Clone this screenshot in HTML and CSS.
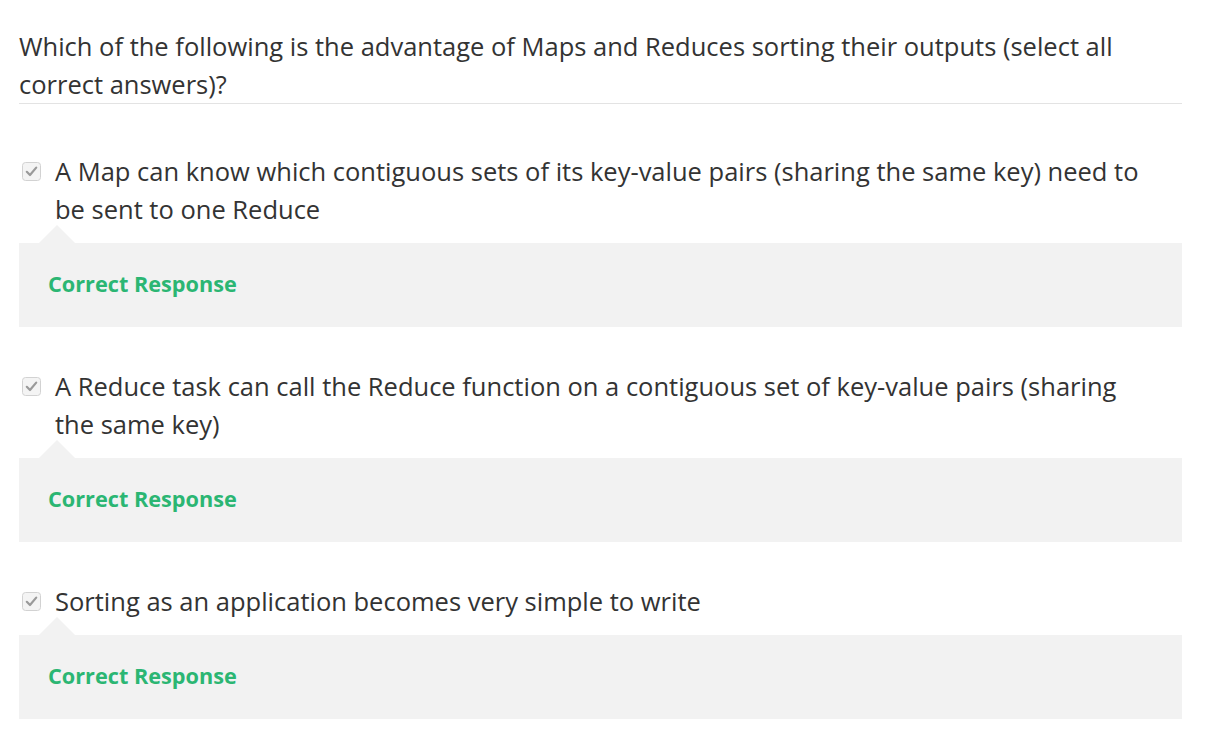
FILE: index.html
```html
<!DOCTYPE html>
<html>
<head>
<meta charset="utf-8">
<link rel="stylesheet" href="styles.css">
</head>
<body>
<div class="quiz">
  <div class="question">Which of the following is the advantage of Maps and Reduces sorting their outputs (select all correct answers)?</div>
  <div class="options">
    <div class="option">
      <div class="answer">
        <span class="check"><svg width="19" height="19" viewBox="0 0 19 19"><rect x="0.5" y="0.5" width="18" height="18" rx="3" fill="#f4f4f4" stroke="#d2d2d2"/><path d="M4.8 9.8 L8 13 L14.2 5.6" fill="none" stroke="#9a9a9a" stroke-width="2.2" stroke-linecap="round" stroke-linejoin="round"/></svg></span>
        <span class="label">A Map can know which contiguous sets of its key-value pairs (sharing the same key) need to be sent to one Reduce</span>
      </div>
      <div class="feedback">Correct Response</div>
    </div>
    <div class="option">
      <div class="answer">
        <span class="check"><svg width="19" height="19" viewBox="0 0 19 19"><rect x="0.5" y="0.5" width="18" height="18" rx="3" fill="#f4f4f4" stroke="#d2d2d2"/><path d="M4.8 9.8 L8 13 L14.2 5.6" fill="none" stroke="#9a9a9a" stroke-width="2.2" stroke-linecap="round" stroke-linejoin="round"/></svg></span>
        <span class="label">A Reduce task can call the Reduce function on a contiguous set of key-value pairs (sharing the same key)</span>
      </div>
      <div class="feedback">Correct Response</div>
    </div>
    <div class="option">
      <div class="answer">
        <span class="check"><svg width="19" height="19" viewBox="0 0 19 19"><rect x="0.5" y="0.5" width="18" height="18" rx="3" fill="#f4f4f4" stroke="#d2d2d2"/><path d="M4.8 9.8 L8 13 L14.2 5.6" fill="none" stroke="#9a9a9a" stroke-width="2.2" stroke-linecap="round" stroke-linejoin="round"/></svg></span>
        <span class="label">Sorting as an application becomes very simple to write</span>
      </div>
      <div class="feedback">Correct Response</div>
    </div>
  </div>
</div>
</body>
</html>
```

FILE: styles.css
```css
html, body {
  margin: 0;
  padding: 0;
  background: #ffffff;
}
body {
  font-family: "Open Sans", "Noto Sans", sans-serif;
  color: #333333;
}
.quiz {
  width: 1163px;
  padding: 27px 0 0 19px;
}
.question {
  font-size: 25.5px;
  line-height: 38px;
  padding-right: 40px;
  border-bottom: 1px solid #e3e3e3;
}
.options {
  display: flex;
  flex-direction: column;
  gap: 40px;
  padding-top: 48px;
}
.answer {
  display: flex;
  align-items: flex-start;
  font-size: 25.5px;
  line-height: 38px;
}
.check {
  flex: none;
  box-sizing: border-box;
  width: 36px;
  padding-left: 3px;
  padding-top: 10px;
  line-height: 0;
}
.label {
  flex: 1;
  padding-right: 40px;
}
.feedback {
  position: relative;
  margin-top: 15px;
  background: #f2f2f2;
  padding: 26px 29px 28px;
  font-size: 21.7px;
  line-height: 30px;
  font-weight: 700;
  color: #2bb673;
}
.feedback::before {
  content: "";
  position: absolute;
  left: 20px;
  top: -18px;
  border-left: 18px solid transparent;
  border-right: 18px solid transparent;
  border-bottom: 18px solid #f2f2f2;
}
```
